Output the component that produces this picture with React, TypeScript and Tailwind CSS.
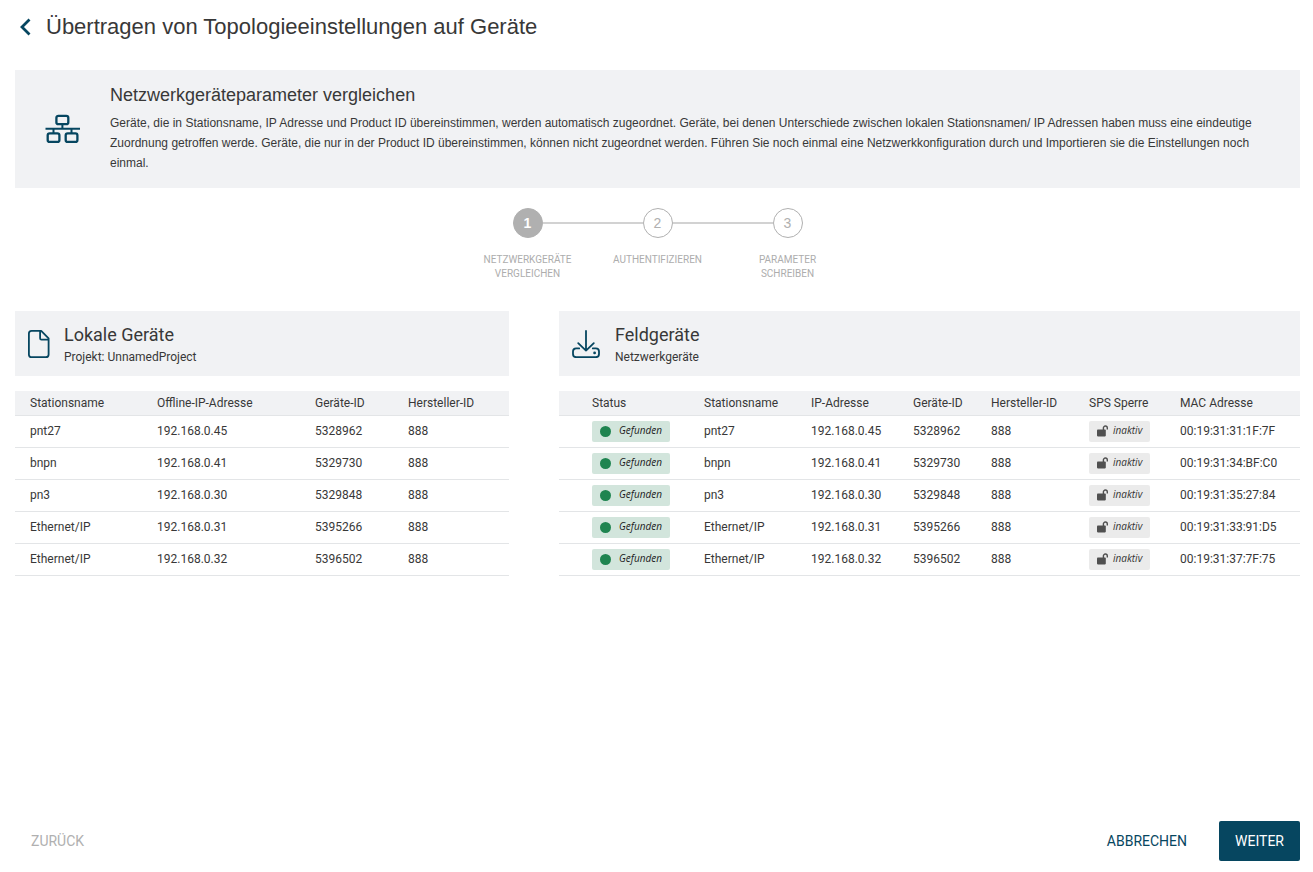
import clsx from 'clsx';

interface LocalDevice {
  station: string;
  ip: string;
  deviceId: string;
  vendorId: string;
}

interface FieldDevice extends LocalDevice {
  mac: string;
}

const localDevices: LocalDevice[] = [
  { station: 'pnt27', ip: '192.168.0.45', deviceId: '5328962', vendorId: '888' },
  { station: 'bnpn', ip: '192.168.0.41', deviceId: '5329730', vendorId: '888' },
  { station: 'pn3', ip: '192.168.0.30', deviceId: '5329848', vendorId: '888' },
  { station: 'Ethernet/IP', ip: '192.168.0.31', deviceId: '5395266', vendorId: '888' },
  { station: 'Ethernet/IP', ip: '192.168.0.32', deviceId: '5396502', vendorId: '888' },
];

const macs = [
  '00:19:31:31:1F:7F',
  '00:19:31:34:BF:C0',
  '00:19:31:35:27:84',
  '00:19:31:33:91:D5',
  '00:19:31:37:7F:75',
];

const fieldDevices: FieldDevice[] = localDevices.map((d, i) => ({ ...d, mac: macs[i] }));

const localColumns = [
  { label: 'Stationsname', width: 'w-[127px]' },
  { label: 'Offline-IP-Adresse', width: 'w-[158px]' },
  { label: 'Geräte-ID', width: 'w-[93px]' },
  { label: 'Hersteller-ID', width: 'w-[116px]' },
];

const fieldColumns = [
  { label: 'Status', width: 'w-[130px]' },
  { label: 'Stationsname', width: 'w-[107px]' },
  { label: 'IP-Adresse', width: 'w-[102px]' },
  { label: 'Geräte-ID', width: 'w-[78px]' },
  { label: 'Hersteller-ID', width: 'w-[98px]' },
  { label: 'SPS Sperre', width: 'w-[91px]' },
  { label: 'MAC Adresse', width: 'w-[135px]' },
];

const steps = ['Netzwerkgeräte vergleichen', 'Authentifizieren', 'Parameter schreiben'];

function NetworkIcon() {
  return (
    <svg width="36" height="30" viewBox="0 0 36 30" fill="none" stroke="#064660" strokeWidth="2.3" aria-hidden="true">
      <rect x="11.4" y="1.8" width="11.9" height="8.4" rx="2" />
      <rect x="2.7" y="19.3" width="11.7" height="8.6" rx="2" />
      <rect x="20.7" y="19.3" width="11.7" height="8.6" rx="2" />
      <path d="M0.5 14.8H35" strokeWidth="2" />
      <path d="M17.4 10v4.5M8.5 15v4.5M26.5 15v4.5" strokeWidth="2" />
    </svg>
  );
}

function FileIcon() {
  return (
    <svg width="22" height="28" viewBox="0 0 22 28" fill="none" stroke="#064660" strokeWidth="1.8" strokeLinejoin="round" aria-hidden="true">
      <path d="M3.6 0.9H13.2L20.6 8.3V24.4a2.7 2.7 0 0 1-2.7 2.7H3.6a2.7 2.7 0 0 1-2.7-2.7V3.6A2.7 2.7 0 0 1 3.6 0.9Z" />
      <path d="M12.1 1v7.2a1.4 1.4 0 0 0 1.4 1.4h7" />
    </svg>
  );
}

function DownloadIcon() {
  return (
    <svg width="28" height="28" viewBox="0 0 28 28" fill="none" stroke="#064660" strokeWidth="1.8" strokeLinecap="round" strokeLinejoin="round" aria-hidden="true">
      <path d="M14 1v19.5M6.2 13.2L14 20.6L21.8 13.2" />
      <path d="M7.2 18.4H4.2A3.2 3.2 0 0 0 1 21.6V24a3.2 3.2 0 0 0 3.2 3.2H23.8A3.2 3.2 0 0 0 27 24V21.6a3.2 3.2 0 0 0-3.2-3.2H20.8" />
      <circle cx="22.6" cy="22.9" r="1.4" fill="#064660" stroke="none" />
    </svg>
  );
}

function UnlockIcon() {
  return (
    <svg width="12" height="12" viewBox="0 0 12 12" fill="none" aria-hidden="true">
      <rect x="0" y="4.6" width="8.8" height="6.8" rx="0.8" fill="#505050" />
      <path d="M6.4 5V3a1.9 1.9 0 0 1 3.9 0V4.6" stroke="#505050" strokeWidth="1.4" />
    </svg>
  );
}

function TableHead({ columns, indent }: { columns: { label: string; width: string }[]; indent?: boolean }) {
  return (
    <thead>
      <tr className="h-6 border-b border-[#e3e5e7] bg-[#f1f2f4]">
        {columns.map((col, i) => (
          <th
            key={col.label}
            scope="col"
            className={clsx('whitespace-nowrap p-0 text-left font-normal', col.width, indent && i === 0 ? 'pl-[33px]' : 'pl-[15px]')}
          >
            {col.label}
          </th>
        ))}
      </tr>
    </thead>
  );
}

export default function App() {
  return (
    <div className="flex min-h-screen flex-col bg-white pt-3 pr-[13px] pb-[11px] pl-[15px] font-[Roboto,sans-serif] text-xs text-[#383838]">
      <header className="flex h-[30px] items-center gap-[14px]">
        <button type="button" aria-label="Zurück" className="pl-1">
          <svg width="13" height="18" viewBox="0 0 13 18" fill="none" stroke="#064660" strokeWidth="2.8" aria-hidden="true">
            <path d="M10.5 1.6L3 9L10.5 16.4" />
          </svg>
        </button>
        <h1 className="font-['Liberation_Sans',Arial,sans-serif] text-[22px] leading-[30px]">
          Übertragen von Topologieeinstellungen auf Geräte
        </h1>
      </header>

      <section className="mt-7 flex items-center bg-[#f1f2f4] pt-[15px] pr-10 pb-[15px] pl-[30px] font-['Liberation_Sans',Arial,sans-serif]">
        <div className="w-[65px] shrink-0">
          <NetworkIcon />
        </div>
        <div>
          <h2 className="text-lg leading-5">Netzwerkgeräteparameter vergleichen</h2>
          <p className="mt-2 leading-5">
            Geräte, die in Stationsname, IP Adresse und Product ID übereinstimmen, werden automatisch zugeordnet. Geräte,
            bei denen Unterschiede zwischen lokalen Stationsnamen/ IP Adressen haben muss eine eindeutige Zuordnung
            getroffen werde. Geräte, die nur in der Product ID übereinstimmen, können nicht zugeordnet werden. Führen Sie
            noch einmal eine Netzwerkkonfiguration durch und Importieren sie die Einstellungen noch einmal.
          </p>
        </div>
      </section>

      <ol className="mt-5 flex justify-center">
        {steps.map((label, i) => (
          <li key={label} className="w-[130px]">
            <div className="flex items-center">
              <span className={clsx('h-[2px] flex-1', i > 0 && 'bg-[#d2d2d2]')} />
              <span
                className={clsx(
                  "flex size-[30px] items-center justify-center rounded-full border border-[#b0b0b0] font-['Liberation_Sans',Arial,sans-serif] text-sm",
                  i === 0 ? 'bg-[#b0b0b0] font-bold text-white' : 'text-[#b0b0b0]'
                )}
              >
                {i + 1}
              </span>
              <span className={clsx('h-[2px] flex-1', i < steps.length - 1 && 'bg-[#d2d2d2]')} />
            </div>
            <p className="mx-auto mt-[15px] w-[100px] text-center text-[10px] leading-[14px] text-[#adadad] uppercase">{label}</p>
          </li>
        ))}
      </ol>

      <main className="mt-[30px] grid grid-cols-[2fr_3fr] gap-[50px]">
        <section>
          <div className="flex h-[65px] items-center gap-[14px] bg-[#f1f2f4] pl-[13px]">
            <FileIcon />
            <div className="pt-0.5">
              <h2 className="text-lg leading-6">Lokale Geräte</h2>
              <p className="leading-5">Projekt: UnnamedProject</p>
            </div>
          </div>
          <table className="mt-[15px] w-full border-collapse">
            <TableHead columns={localColumns} />
            <tbody>
              {localDevices.map((d) => (
                <tr key={d.deviceId} className="h-8 border-b border-[#e3e5e7]">
                  <td className="p-0 pl-[15px]">{d.station}</td>
                  <td className="p-0 pl-[15px]">{d.ip}</td>
                  <td className="p-0 pl-[15px]">{d.deviceId}</td>
                  <td className="p-0 pl-[15px]">{d.vendorId}</td>
                </tr>
              ))}
            </tbody>
          </table>
        </section>

        <section>
          <div className="flex h-[65px] items-center gap-[15px] bg-[#f1f2f4] pl-[13px]">
            <DownloadIcon />
            <div className="pt-0.5">
              <h2 className="text-lg leading-6">Feldgeräte</h2>
              <p className="leading-5">Netzwerkgeräte</p>
            </div>
          </div>
          <table className="mt-[15px] w-full border-collapse">
            <TableHead columns={fieldColumns} indent />
            <tbody>
              {fieldDevices.map((d) => (
                <tr key={d.mac} className="h-8 border-b border-[#e3e5e7]">
                  <td className="p-0 pl-[33px]">
                    <span className="flex h-[21px] w-[78px] items-center gap-2 rounded-[2px] bg-[#d2e5dc] pl-2 font-['Open_Sans',sans-serif] text-[10px] text-[#1c1c1c] italic">
                      <span className="size-[11px] rounded-full bg-[#1f8450]" />
                      Gefunden
                    </span>
                  </td>
                  <td className="p-0 pl-[15px]">{d.station}</td>
                  <td className="p-0 pl-[15px]">{d.ip}</td>
                  <td className="p-0 pl-[15px]">{d.deviceId}</td>
                  <td className="p-0 pl-[15px]">{d.vendorId}</td>
                  <td className="p-0 pl-[15px]">
                    <span className="flex h-[21px] w-[61px] items-center gap-1 rounded-[2px] bg-[#ebebeb] pl-2 font-['Open_Sans',sans-serif] text-[10px] text-[#333] italic">
                      <UnlockIcon />
                      inaktiv
                    </span>
                  </td>
                  <td className="p-0 pl-[15px]">{d.mac}</td>
                </tr>
              ))}
            </tbody>
          </table>
        </section>
      </main>

      <footer className="mt-auto flex items-center text-sm">
        <button type="button" disabled className="h-10 px-4 text-[#b0b0b0]">
          ZURÜCK
        </button>
        <button type="button" className="ml-auto h-10 px-4 text-[#064660]">
          ABBRECHEN
        </button>
        <button type="button" className="ml-4 h-10 rounded-[2px] bg-[#064660] px-4 text-white">
          WEITER
        </button>
      </footer>
    </div>
  );
}
